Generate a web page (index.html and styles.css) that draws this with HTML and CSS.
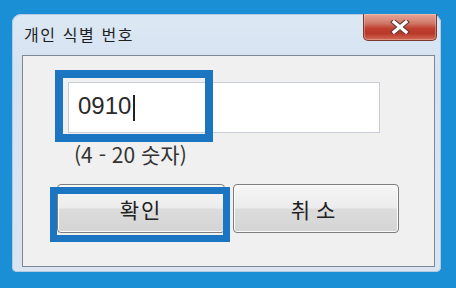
FILE: index.html
```html
<!DOCTYPE html>
<html lang="ko">
<head>
<meta charset="utf-8">
<link rel="stylesheet" href="styles.css">
</head>
<body>
<div class="window">
  <div class="titlebar">
    <div class="title">개인 식별 번호</div>
    <div class="close">
      <svg width="20" height="14" viewBox="0 0 20 14">
        <path d="M4 2 L16 12 M16 2 L4 12" stroke="#6b3a34" stroke-width="5.5" stroke-linecap="square"/>
        <path d="M4 2 L16 12 M16 2 L4 12" stroke="#ffffff" stroke-width="3.2" stroke-linecap="square"/>
      </svg>
    </div>
  </div>
  <div class="client">
    <div class="field">
      <span class="value">0910</span><span class="caret"></span>
    </div>
    <div class="hint">(4 - 20 숫자)</div>
    <div class="buttons">
      <div class="btn ok">확인</div>
      <div class="btn cancel">취소</div>
    </div>
    <div class="mark mark-field"></div>
    <div class="mark mark-ok"></div>
  </div>
</div>
</body>
</html>
```
FILE: styles.css
```css
html, body {
  margin: 0;
  padding: 0;
}
body {
  width: 456px;
  height: 288px;
  background: #1a8fd6;
  overflow: hidden;
  font-family: "Noto Sans CJK KR", "Liberation Sans", sans-serif;
}
.window {
  margin: 14px 0 0 12px;
  width: 429px;
  height: 258px;
  box-sizing: border-box;
  border-radius: 9px 9px 5px 5px;
  background: linear-gradient(180deg, #dde8f4 0%, #d5e2f0 20%, #dae5f1 100%);
  box-shadow: inset 0 0 0 1px #b3c9e0;
  display: flex;
  flex-direction: column;
}
.titlebar {
  height: 41px;
  display: flex;
  align-items: flex-start;
  justify-content: space-between;
}
.title {
  margin: 9px 0 0 12px;
  font-size: 16px;
  letter-spacing: 1.6px;
  color: #1f1f1f;
  line-height: 22px;
}
.close {
  margin-right: 4px;
  width: 74px;
  height: 27px;
  box-sizing: border-box;
  border: 1px solid #7a3830;
  border-top: none;
  border-radius: 0 0 5px 5px;
  background: linear-gradient(180deg, #e7a597 0%, #d0796a 35%, #c0412f 55%, #b8392a 75%, #d06a55 100%);
  display: flex;
  align-items: center;
  justify-content: center;
  box-shadow: inset 0 0 0 1px rgba(255,220,210,0.35);
}
.client {
  position: relative;
  margin: 0 6px 5px 10px;
  flex: 1;
  border: 1px solid #7d8894;
  background: #f0f0f0;
}
.field {
  margin: 26px 0 0 45px;
  width: 312px;
  height: 51px;
  box-sizing: border-box;
  border: 1px solid #c9ced6;
  background: #ffffff;
  display: flex;
  align-items: center;
  padding: 0 0 4px 9px;
}
.value {
  font-family: "Liberation Sans", Arial, sans-serif;
  font-size: 24px;
  color: #2a2a2a;
  line-height: 28px;
}
.caret {
  width: 2px;
  height: 26px;
  margin-left: 2px;
  background: #222;
  margin-top: 4px;
}
.hint {
  margin: 7px 0 0 51px;
  font-size: 21px;
  line-height: 28px;
  color: #333;
}
.buttons {
  display: flex;
  gap: 8px;
  margin: 16px 0 0 34px;
}
.btn {
  height: 49px;
  box-sizing: border-box;
  border: 1px solid #7d7d7d;
  border-radius: 4px;
  background: linear-gradient(180deg, #f6f6f6 0%, #ececec 48%, #dcdcdc 52%, #d4d4d4 100%);
  display: flex;
  align-items: center;
  justify-content: center;
  font-size: 21px;
  color: #222;
  letter-spacing: 2px;
  box-shadow: inset 0 0 0 1px #fbfbfb;
}
.ok {
  width: 168px;
}
.cancel {
  width: 166px;
  letter-spacing: 6px;
}
.mark {
  position: absolute;
  border: 7px solid #1b75c0;
  box-sizing: border-box;
}
.mark-field {
  left: 32px;
  top: 14px;
  width: 158px;
  height: 72px;
  border-width: 8px;
}
.mark-ok {
  left: 27px;
  top: 131px;
  width: 180px;
  height: 55px;
}
```
